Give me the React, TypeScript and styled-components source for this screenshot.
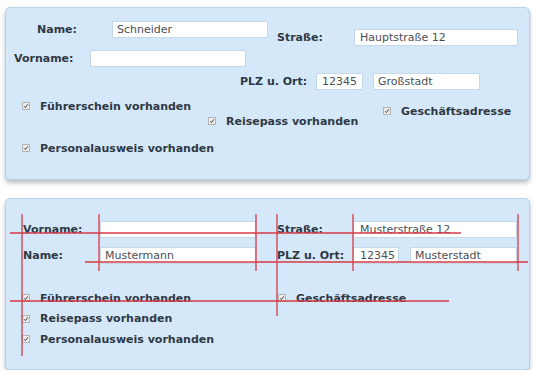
import React from "react";
import styled, { createGlobalStyle } from "styled-components";

const Global = createGlobalStyle`
  html, body { margin: 0; padding: 0; background: #ffffff; }
  body { font-family: "DejaVu Sans", Verdana, sans-serif; }
`;

const Page = styled.div`
  display: flex;
  flex-direction: column;
  gap: 18px;
  padding: 7px 3px 0 5px;
  width: 525px;
`;

const Panel = styled.section<{ $h: number }>`
  position: relative;
  box-sizing: border-box;
  height: ${(p) => p.$h}px;
  background: #d5e8f9;
  border: 1px solid #b9d2e8;
  border-radius: 5px;
  box-shadow: 0 3px 4px rgba(60, 70, 90, 0.35);
`;

const Row = styled.div<{ $mt: number; $pl: number }>`
  display: flex;
  align-items: flex-start;
  margin-top: ${(p) => p.$mt}px;
  padding-left: ${(p) => p.$pl}px;
`;

const Field = styled.div<{ $mt?: number; $ml?: number }>`
  display: flex;
  align-items: center;
  margin-top: ${(p) => p.$mt ?? 0}px;
  margin-left: ${(p) => p.$ml ?? 0}px;
`;

const Label = styled.span<{ $w: number }>`
  width: ${(p) => p.$w}px;
  flex: none;
  font-size: 11px;
  font-weight: bold;
  color: #2f3944;
  white-space: nowrap;
  line-height: 14px;
`;

const TextBox = styled.input<{ $w: number; $ml?: number; $pad?: number }>`
  box-sizing: border-box;
  width: ${(p) => p.$w}px;
  height: 17px;
  margin: 0 0 0 ${(p) => p.$ml ?? 0}px;
  padding: 0 0 0 ${(p) => p.$pad ?? 4}px;
  border: 1px solid #c6d9ea;
  background: #ffffff;
  font-family: "DejaVu Sans", Verdana, sans-serif;
  font-size: 11px;
  color: #4b4f55;
  outline: none;
`;

const CheckItem = styled.div<{ $w?: number; $mt?: number }>`
  display: flex;
  align-items: center;
  width: ${(p) => (p.$w ? `${p.$w}px` : "auto")};
  flex: none;
  margin-top: ${(p) => p.$mt ?? 0}px;
  height: 14px;
  font-size: 11px;
  font-weight: bold;
  color: #2f3944;
  white-space: nowrap;
`;

const Box = styled.svg`
  flex: none;
  width: 8px;
  height: 8px;
  margin-right: 10px;
`;

const Check = ({ label, w, mt }: { label: string; w?: number; mt?: number }) => (
  <CheckItem $w={w} $mt={mt}>
    <Box viewBox="0 0 8 8">
      <rect x="0.5" y="0.5" width="7" height="7" fill="#ececec" stroke="#b4b4b4" />
      <path d="M2.2 4.3 L3.4 5.6 L5.9 2.3" fill="none" stroke="#3a3a3a" strokeWidth="1" />
    </Box>
    {label}
  </CheckItem>
);

const FormGrid = styled.div`
  display: grid;
  grid-template-columns: 77px 156px 21px 76px 164px;
  grid-auto-rows: 17px;
  row-gap: 9px;
  align-items: center;
  margin: 22px 0 0 17px;
`;

const Gap = styled.span``;

const Pair = styled.div`
  display: flex;
`;

const CheckGrid = styled.div`
  display: grid;
  grid-template-columns: 256px auto;
  grid-auto-rows: 20.5px;
  align-items: center;
  margin: 24px 0 0 16px;
`;

const Overlay = styled.svg`
  position: absolute;
  left: 0;
  top: 0;
  width: 100%;
  height: 100%;
  pointer-events: none;
  overflow: visible;
`;

const lines: [number, number, number, number][] = [
  [4, 34, 455, 34],
  [79, 63, 522, 63],
  [4, 102, 443, 102],
  [16, 15, 16, 157],
  [93, 15, 93, 72],
  [250, 15, 250, 72],
  [271, 15, 271, 117],
  [347, 15, 347, 72],
  [512, 15, 512, 72],
];

export default function App() {
  return (
    <>
      <Global />
      <Page>
        <Panel $h={173}>
          <Row $mt={13} $pl={31}>
            <Field>
              <Label $w={75}>Name:</Label>
              <TextBox $w={156} defaultValue="Schneider" readOnly />
            </Field>
            <Field $mt={8} $ml={9}>
              <Label $w={77}>Straße:</Label>
              <TextBox $w={164} $pad={5} defaultValue="Hauptstraße 12" readOnly />
            </Field>
          </Row>
          <Row $mt={4} $pl={8}>
            <Field>
              <Label $w={76}>Vorname:</Label>
              <TextBox $w={156} defaultValue="" readOnly />
            </Field>
          </Row>
          <Row $mt={6} $pl={234}>
            <Field>
              <Label $w={76}>PLZ u. Ort:</Label>
              <TextBox $w={47} $pad={5} defaultValue="12345" readOnly />
              <TextBox $w={107} $ml={10} defaultValue="Großstadt" readOnly />
            </Field>
          </Row>
          <Row $mt={9} $pl={16}>
            <Check label="Führerschein vorhanden" w={186} />
            <Check label="Reisepass vorhanden" w={175} mt={15} />
            <Check label="Geschäftsadresse" mt={5} />
          </Row>
          <Row $mt={13} $pl={16}>
            <Check label="Personalausweis vorhanden" />
          </Row>
        </Panel>

        <Panel $h={172}>
          <FormGrid>
            <Label $w={77}>Vorname:</Label>
            <TextBox $w={156} defaultValue="" readOnly />
            <Gap />
            <Label $w={76}>Straße:</Label>
            <TextBox $w={164} $pad={6} defaultValue="Musterstraße 12" readOnly />
            <Label $w={77}>Name:</Label>
            <TextBox $w={156} defaultValue="Mustermann" readOnly />
            <Gap />
            <Label $w={76}>PLZ u. Ort:</Label>
            <Pair>
              <TextBox $w={46} $pad={6} defaultValue="12345" readOnly />
              <TextBox $w={107} $ml={11} defaultValue="Musterstadt" readOnly />
            </Pair>
          </FormGrid>
          <CheckGrid>
            <Check label="Führerschein vorhanden" />
            <Check label="Geschäftsadresse" />
            <Check label="Reisepass vorhanden" />
            <span />
            <Check label="Personalausweis vorhanden" />
          </CheckGrid>
          <Overlay>
            {lines.map(([x1, y1, x2, y2], i) => (
              <line key={i} x1={x1} y1={y1} x2={x2} y2={y2} stroke="#d63a45" strokeWidth="1.3" />
            ))}
          </Overlay>
        </Panel>
      </Page>
    </>
  );
}
